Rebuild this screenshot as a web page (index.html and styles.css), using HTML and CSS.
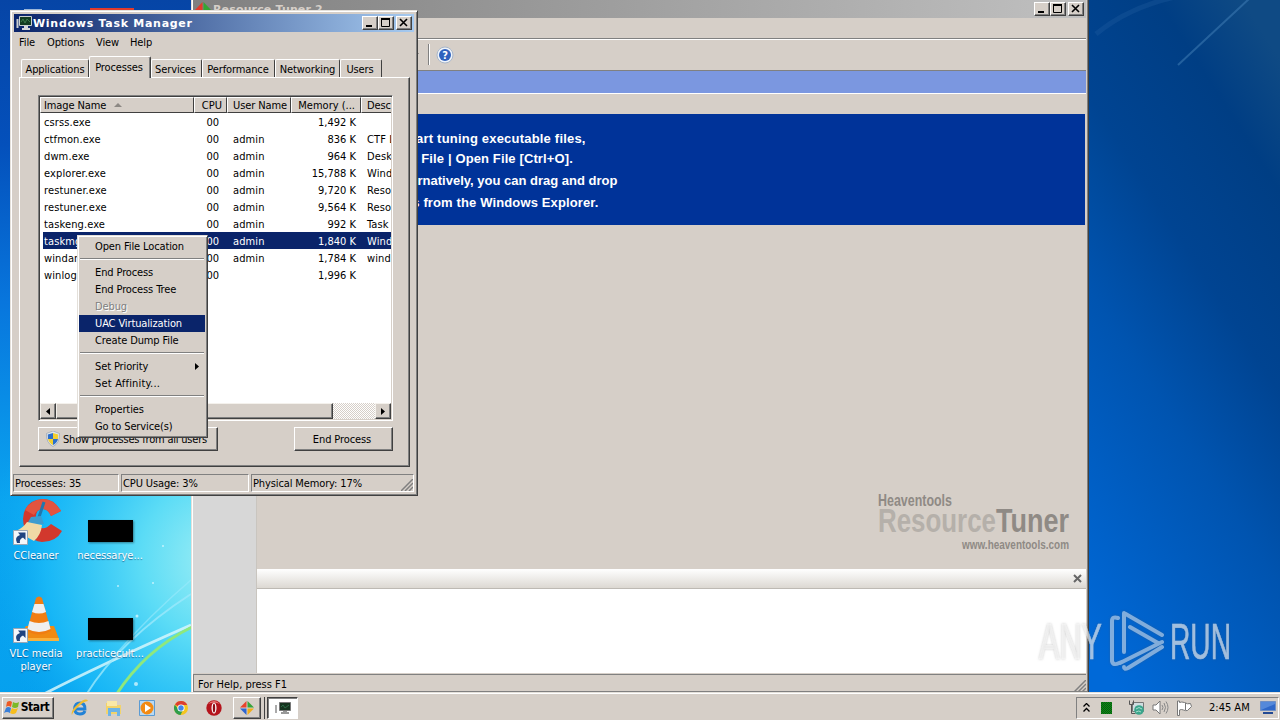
FILE: index.html
```html
<!DOCTYPE html>
<html lang="en">
<head>
  <meta charset="UTF-8">
  <meta name="viewport" content="width=device-width, initial-scale=1.0">
  <title>Windows Task Manager</title>
  <link rel="stylesheet" href="styles.css">
</head>
<body>
  <div class="desktop">
    <svg class="wallpaper" viewBox="0 0 1280 720" preserveAspectRatio="none">
      <defs>
        <linearGradient id="leftSky" x1="0" y1="0" x2="0" y2="1">
          <stop offset="0" stop-color="#0645a6"/>
          <stop offset=".2" stop-color="#0450bb"/>
          <stop offset=".42" stop-color="#0876dd"/>
          <stop offset=".7" stop-color="#0aa5f0"/>
          <stop offset="1" stop-color="#05a0ee"/>
        </linearGradient>
        <radialGradient id="glow" cx="225" cy="560" r="240" gradientUnits="userSpaceOnUse">
          <stop offset="0" stop-color="#a4f0f4"/>
          <stop offset=".35" stop-color="#5cdcf6"/>
          <stop offset=".75" stop-color="#1cbcf8" stop-opacity=".8"/>
          <stop offset="1" stop-color="#0aa5f0" stop-opacity="0"/>
        </radialGradient>
        <linearGradient id="rightSky" x1="1088" y1="640" x2="1488" y2="384" gradientUnits="userSpaceOnUse">
          <stop offset="0" stop-color="#0069d8"/>
          <stop offset=".4" stop-color="#0054b0"/>
          <stop offset=".62" stop-color="#004492"/>
          <stop offset=".85" stop-color="#003e84"/>
          <stop offset="1" stop-color="#0f4a84"/>
        </linearGradient>
      </defs>
      <rect width="600" height="720" fill="url(#leftSky)"/>
      <rect width="600" height="720" fill="url(#glow)"/>
      <rect x="600" width="680" height="720" fill="url(#rightSky)"/>
      <path d="M1178 65 1250-2" stroke="#3b78b0" stroke-width="2" opacity=".6"/>
      <path d="M1096 34Q1130 6 1180-4" stroke="#2a68a8" stroke-width="5" fill="none" opacity=".25"/>
      <path d="M42 695Q100 665 191 625" stroke="#d5f6fb" stroke-width="3" fill="none" opacity=".85"/>
      <path d="M86 695Q120 640 191 594" stroke="#9be9fb" stroke-width="2" fill="none" opacity=".8"/>
      <path d="M115 655Q150 615 191 580" stroke="#9be9fb" stroke-width="1.5" fill="none" opacity=".6"/>
      <path d="M116 695Q145 650 192 627" stroke="#8fe87c" stroke-width="3" fill="none"/>
      <path d="M90 8h44v3H90z" fill="#e23b2b"/>
      <path d="M24 9h18v2H24z" fill="#9db7d8"/>
      <g fill="#e8fbff" opacity=".7"><circle cx="118" cy="586" r="1"/><circle cx="136" cy="684" r="2"/><circle cx="153" cy="583" r="1"/><circle cx="137" cy="616" r="1.5"/><circle cx="163" cy="546" r="1"/></g>
    </svg>

    <div class="shortcuts">
      <div class="shortcut">
        <svg width="50" height="48" viewBox="0 0 50 48">
          <path d="M47 14Q40 2 29 2Q10 3 9 22Q10 43 28 45Q42 45 48 34L37 27Q28 36 22 26Q20 12 29 12Q34 12 37 19Z" fill="#d2382d"/>
          <path d="M47 14Q40 2 29 2Q16 3 11 13L20 18Q23 12 29 12Q34 12 37 19Z" fill="#e3543f"/>
          <path d="M30 5 25 20" stroke="#2277ad" stroke-width="3"/>
          <path d="M17 20 27 19 30 27 13 27Z" fill="#3d9ccf"/>
          <path d="M13 25 28 28Q27 38 20 44L2 34Q9 31 13 25Z" fill="#f0d9a5"/>
        </svg>
        <svg class="arrow" width="15" height="15" viewBox="0 0 15 15"><path d="M.5.5h14v14H.5z" fill="#f4f7fa" stroke="#9aa7b5"/><path d="M4 13Q1 7 7 5L5 2.500h7.500V10L10 7.500Q6 9 7 13Z" fill="#20437f"/></svg>
        <span>CCleaner</span>
      </div>
      <div class="shortcut">
        <div class="thumb"></div>
        <span>necessarye...</span>
      </div>
      <div class="shortcut">
        <svg width="50" height="48" viewBox="0 0 50 48">
          <path d="M8 37 12 31H40L45 44H8Z" fill="#f08a12"/><path d="M8 43h37v3H8z" fill="#f9b13c"/>
          <path d="M22 3Q25 0 28 3L37 36Q25 43 13 36Z" fill="#f07d12"/>
          <path d="M20.500 9h9l2.500 8Q25 20 18 17ZM15.500 26Q25 30 34.500 26L36.500 34Q25 40 13.500 34Z" fill="#efefef"/>
        </svg>
        <svg class="arrow" width="15" height="15" viewBox="0 0 15 15"><path d="M.5.5h14v14H.5z" fill="#f4f7fa" stroke="#9aa7b5"/><path d="M4 13Q1 7 7 5L5 2.500h7.500V10L10 7.500Q6 9 7 13Z" fill="#20437f"/></svg>
        <span>VLC media<br>player</span>
      </div>
      <div class="shortcut">
        <div class="thumb"></div>
        <span>practicecult...</span>
      </div>
    </div>

    <!-- Resource Tuner -->
    <div class="window tuner">
      <div class="titlebar inactive">
        <svg class="title-icon" width="16" height="16" viewBox="0 0 16 16"><path d="M7.500 1v8H0Z" fill="#e23b2b"/><path d="M8.500 1v8H16Z" fill="#34a534"/><path d="M0 10h7.500v6Z" fill="#2f66d0"/><path d="M16 10H8.500v6Z" fill="#f2bd18"/></svg>
        <span class="title-text">Resource Tuner 2</span>
        <div class="caption-buttons">
          <span class="cap"><svg width="14" height="12"><path d="M3 8h6v2H3z"/></svg></span><span class="cap"><svg width="14" height="12"><path d="M2.500 2.500h8v7h-8z" fill="none" stroke="#000"/><path d="M2 1h9v2H2z"/></svg></span><span class="cap cap-close"><svg width="14" height="12"><path d="m3 2 7 7m0-7-7 7" stroke="#000" stroke-width="1.600"/></svg></span>
        </div>
      </div>
      <div class="tuner-menu"></div>
      <div class="tuner-toolbar">
        <span class="drop"></span>
        <span class="tool-sep"></span>
        <svg width="18" height="18" viewBox="0 0 18 18"><circle cx="9" cy="9" r="8" fill="#eef3fa" stroke="#a9b6c8"/><circle cx="9" cy="9" r="6" fill="#2f62bd"/><text x="9" y="13" text-anchor="middle" class="help-mark">?</text></svg>
      </div>
      <div class="tuner-band"></div>
      <div class="tuner-gap"></div>
      <div class="tuner-main">
        <div class="tuner-side"></div>
        <div class="tuner-view">
          <div class="intro">
            <p class="line-start">To start tuning executable files,</p>
            <p class="line-open">select File | Open File [Ctrl+O].</p>
            <p class="line-drag">Alternatively, you can drag and drop</p>
            <p class="line-from">files from the Windows Explorer.</p>
          </div>
          <div class="brand">
            <svg width="196" height="62" viewBox="0 0 196 62">
              <text x="1" y="16" textLength="74" lengthAdjust="spacingAndGlyphs" class="brand-top">Heaventools</text>
              <text x="1" y="42" textLength="118" lengthAdjust="spacingAndGlyphs" class="brand-light">Resource</text>
              <text x="119" y="42" textLength="73" lengthAdjust="spacingAndGlyphs" class="brand-dark">Tuner</text>
              <text x="85" y="59" textLength="107" lengthAdjust="spacingAndGlyphs" class="brand-url">www.heaventools.com</text>
            </svg>
          </div>
          <div class="log-head"><svg width="9" height="9" viewBox="0 0 9 9"><path d="m1 1 7 7m0-7-7 7" stroke="#666" stroke-width="2"/></svg></div>
          <div class="log-body"></div>
        </div>
      </div>
      <div class="tuner-status"><span>For Help, press F1</span><svg width="12" height="12" viewBox="0 0 12 12"><path d="M0 12 12 0M4 12l8-8M8 12l4-4" stroke="#808080" stroke-width="1.500"/></svg></div>
    </div>

    <!-- Task Manager -->
    <div class="window taskmgr">
      <div class="titlebar">
        <svg class="title-icon" width="16" height="16" viewBox="0 0 16 16"><path d="M.5 4h2v9h-2z" fill="#c8ccd0"/><path d="M3.500 1.500h12v9h-12z" fill="#123c22" stroke="#c9d0cf"/><path d="M5 7l2-3 2 4 2-4 3 3" stroke="#3a7a4b" fill="none"/><path d="M8 11h4v2h2v2H6v-2h2z" fill="#d5d8da"/></svg>
        <span class="title-text">Windows Task Manager</span>
        <div class="caption-buttons">
          <span class="cap"><svg width="14" height="12"><path d="M3 8h6v2H3z"/></svg></span><span class="cap"><svg width="14" height="12"><path d="M2.500 2.500h8v7h-8z" fill="none" stroke="#000"/><path d="M2 1h9v2H2z"/></svg></span><span class="cap cap-close"><svg width="14" height="12"><path d="m3 2 7 7m0-7-7 7" stroke="#000" stroke-width="1.600"/></svg></span>
        </div>
      </div>
      <div class="menubar"><span class="m-file">File</span><span class="m-options">Options</span><span class="m-view">View</span><span>Help</span></div>
      <div class="tabs">
        <div class="tab t-app">Applications</div>
        <div class="tab t-proc active">Processes</div>
        <div class="tab t-serv">Services</div>
        <div class="tab t-perf">Performance</div>
        <div class="tab t-net">Networking</div>
        <div class="tab t-users">Users</div>
      </div>
      <div class="tab-panel">
        <div class="list">
          <div class="row head"><span>Image Name <i class="sort"></i></span><span>CPU</span><span>User Name</span><span>Memory (...</span><span>Desc</span></div>
          <div class="row"><span>csrss.exe</span><span>00</span><span></span><span>1,492 K</span><span></span></div>
          <div class="row"><span>ctfmon.exe</span><span>00</span><span>admin</span><span>836 K</span><span>CTF L</span></div>
          <div class="row"><span>dwm.exe</span><span>00</span><span>admin</span><span>964 K</span><span>Desk</span></div>
          <div class="row"><span>explorer.exe</span><span>00</span><span>admin</span><span>15,788 K</span><span>Wind</span></div>
          <div class="row"><span>restuner.exe</span><span>00</span><span>admin</span><span>9,720 K</span><span>Reso</span></div>
          <div class="row"><span>restuner.exe</span><span>00</span><span>admin</span><span>9,564 K</span><span>Reso</span></div>
          <div class="row"><span>taskeng.exe</span><span>00</span><span>admin</span><span>992 K</span><span>Task</span></div>
          <div class="row selected"><span>taskmgr.exe</span><span>00</span><span>admin</span><span>1,840 K</span><span>Wind</span></div>
          <div class="row"><span>windanr.exe</span><span>00</span><span>admin</span><span>1,784 K</span><span>winda</span></div>
          <div class="row"><span>winlogon.exe</span><span>00</span><span></span><span>1,996 K</span><span></span></div>
          <div class="scrollbar"><span class="sb-btn"><svg width="4" height="7"><path d="M4 0v7L0 3.500Z"/></svg></span><span class="sb-thumb"></span><span class="sb-track"></span><span class="sb-btn"><svg width="4" height="7"><path d="M0 0v7l4-3.500Z"/></svg></span></div>
        </div>
        <div class="panel-actions">
          <button class="btn show-all"><svg width="14" height="16" viewBox="0 0 14 16"><path d="M7 0 13.500 2.500Q14 12 7 15.500Q0 12 .5 2.500Z" fill="#dfe6ee" stroke="#8b98a8" stroke-width=".6"/><path d="M7 2v6H2L1.800 3.500Z" fill="#2c6fca"/><path d="M7 2v6h5l.2-4.500Z" fill="#f3cf2e"/><path d="M2 8h5v6Q3 12 2 8Z" fill="#f3cf2e"/><path d="M12 8H7v6Q11 12 12 8Z" fill="#2c6fca"/></svg>Show processes from all users</button>
          <button class="btn end">End Process</button>
        </div>
      </div>
      <div class="statusbar"><span class="s-proc">Processes: 35</span><span class="s-cpu">CPU Usage: 3%</span><span class="s-mem">Physical Memory: 17%<svg width="12" height="12" viewBox="0 0 12 12"><path d="M0 12 12 0M4 12l8-8M8 12l4-4" stroke="#808080" stroke-width="1.500"/></svg></span></div>
    </div>

    <ul class="context-menu">
      <li>Open File Location</li>
      <li class="sep"></li>
      <li>End Process</li>
      <li>End Process Tree</li>
      <li class="disabled">Debug</li>
      <li class="hover">UAC Virtualization</li>
      <li>Create Dump File</li>
      <li class="sep"></li>
      <li>Set Priority<svg width="4" height="7"><path d="M0 0v7l4-3.500Z"/></svg></li>
      <li class="affinity">Set Affinity...</li>
      <li class="sep"></li>
      <li>Properties</li>
      <li>Go to Service(s)</li>
    </ul>

    <svg class="watermark" width="200" height="70" viewBox="0 0 200 70">
      <g class="wm-text">
        <text x="3" y="52" textLength="63" lengthAdjust="spacingAndGlyphs">ANY</text>
        <text x="134" y="52" textLength="61" lengthAdjust="spacingAndGlyphs">RUN</text>
      </g>
      <path d="M82 11Q76 9 76 14V54Q77 59 83 56L88 54 M88 45V6L126 28 M94 20 122 36M88 45V6 M84 56 126 35M88 60Q88 63 92 61L126 40" fill="none" stroke="#b9d6f5" stroke-width="4" stroke-linejoin="round" stroke-linecap="round" opacity=".65"/>
    </svg>

    <div class="taskbar">
      <button class="start"><svg width="16" height="15" viewBox="0 0 16 15"><path d="M3 2Q6 0 8 2L7 7Q4 5 2 7Z" fill="#ee5a24"/><path d="M9 2Q12 4 15 2L14 7Q11 9 8 7Z" fill="#7cb928"/><path d="M2 8Q4 6 7 8L6 13Q3 11 0 13Z" fill="#3a7fd8"/><path d="M8 8Q11 10 14 8L12 13Q9 15 6 13Z" fill="#f7bd1c"/></svg>Start</button>
      <div class="quick">
        <svg width="18" height="18" viewBox="0 0 18 18"><path d="M4 10h10Q14 4 9 4T3.500 10Q4 15 9 15q4 0 5-3" fill="none" stroke="#2382d6" stroke-width="2.800"/><path d="M1 16Q-1 12 7 5T17 2Q13 2 7 8T1 16Z" fill="#eebc32"/></svg>
        <svg width="18" height="18" viewBox="0 0 18 18"><path d="M1 4h6l1 2h8v9H1z" fill="#f2d36b"/><path d="M2 2h10v5H2z" fill="#f9e8a8"/><path d="M3 9h12v8h-3v-4H6v4H3z" fill="#6db4e6"/></svg>
        <svg width="18" height="18" viewBox="0 0 18 18"><path d="M1.500 1.500h15v15h-15z" fill="#b9d9f3" stroke="#5b9bd3"/><circle cx="9" cy="9" r="6.500" fill="#f28a14"/><path d="M7 5v8l6-4z" fill="#fff"/></svg>
        <svg width="18" height="18" viewBox="0 0 18 18"><circle cx="9" cy="9" r="7" fill="#f4c51f"/><path d="M9 9 3 5.400A7 7 0 0 1 15.300 6H9Z" fill="#dc3e30"/><path d="M2.800 5.700A7 7 0 0 0 8.500 16L11 11 7 11Z" fill="#2f9d4b"/><circle cx="9" cy="9" r="3.600" fill="#fff"/><circle cx="9" cy="9" r="2.700" fill="#4285e8"/></svg>
        <svg width="18" height="18" viewBox="0 0 18 18"><circle cx="9" cy="9" r="7.700" fill="#b5141c"/><path d="M3 5Q9-1 15 5Q9 2 3 5Z" fill="#ea7a75"/><ellipse cx="9" cy="9" rx="2.500" ry="5.500" fill="#fff"/><ellipse cx="9" cy="9" rx="1.200" ry="4.500" fill="#8e0d14"/></svg>
      </div>
      <div class="task-btn"><svg width="16" height="16" viewBox="0 0 16 16"><path d="M7.500 1v6.500H1Z" fill="#e8432c"/><path d="M8.500 1v6.500H15Z" fill="#38a53a"/><path d="M1 8.500h6.500V15Z" fill="#2f66d0"/><path d="M15 8.500H8.500V15Z" fill="#f2ad18"/></svg></div>
      <div class="task-edge"></div>
      <div class="task-btn pressed"><svg width="18" height="16" viewBox="0 0 18 16"><path d="M1 5h2v8H1z" fill="#aaa"/><path d="M5.500 2.500h11v8h-11z" fill="#15331f" stroke="#777"/><path d="M7 7l2-2 2 3 4-3" stroke="#2b6b45" fill="none"/><path d="M9 11h4v1h2v2H7v-2h2z" fill="#999"/></svg></div>
      <div class="tray">
        <svg class="chev" width="7" height="9" viewBox="0 0 7 9"><path d="m.5 3.500 3-3 3 3m-6 5 3-3 3 3" stroke="#000" stroke-width="1.300" fill="none"/></svg>
        <span class="cpu-meter"></span>
        <svg class="net" width="17" height="16" viewBox="0 0 17 16"><path d="M4.500 2.500h11v9h-11z" fill="#cfdde0" stroke="#777"/><path d="M1.500.5v4h4v-4M3.500 4.500v9h4" fill="none" stroke="#555"/><circle cx="11" cy="10" r="4.800" fill="#3ba58b"/><path d="M8 9q3-3 6 0M8 12q3-2 5 0" stroke="#a8dccf" fill="none"/></svg>
        <svg class="vol" width="17" height="15" viewBox="0 0 17 15"><path d="M1 5h3l4-4v13l-4-4H1Z" fill="#fff" stroke="#777"/><path d="M10 5q2 2.500 0 5M12 3q3 4.500 0 9M14 1.500q4 6 0 12" fill="none" stroke="#888"/></svg>
        <svg class="flag" width="17" height="16" viewBox="0 0 17 16"><path d="M1.500 1v14.500h2V10q2-1 4 0 2 1 4 .5l4-4-1-3q-3 1-6-1-3-1-5 0V1Z" fill="#fff" stroke="#777"/><path d="M9.500 3v7" stroke="#777"/></svg>
        <span class="clock">2:45 AM</span>
        <svg width="16" height="13" viewBox="0 0 16 13"><path d="M.5.5h15v9H.5z" fill="#2f68c9" stroke="#6f8fc4"/><path d="M1 9 15 3V1H1Z" fill="#6fa0e6" opacity=".6"/><path d="M3 11h10v2H3z" fill="#234a94"/></svg>
      </div>
    </div>
  </div>
</body>
</html>
```

FILE: styles.css
```css
:root {
  --face: #d6cfc8;
  --dark: #404040;
  --shadow: #808080;
  --select: #0a246a;
}

* {
  margin: 0;
  padding: 0;
  box-sizing: border-box;
}

body {
  font-family: 'DejaVu Sans Condensed', 'DejaVu Sans', sans-serif;
  font-size: 11px;
  line-height: 17px;
  letter-spacing: -0.12px;
  color: #000;
  white-space: nowrap;
  overflow: hidden;
}

svg {
  display: block;
  flex: none;
}

.desktop {
  position: relative;
  width: 1280px;
  height: 720px;
  overflow: hidden;
}

.wallpaper {
  position: absolute;
  inset: 0;
  width: 1280px;
  height: 720px;
}

/* desktop icons */
.shortcuts {
  position: absolute;
  left: 0;
  top: 497px;
  display: grid;
  grid-template-columns: 72px 76px;
  grid-template-rows: 98px 98px;
  letter-spacing: 0;
}

.shortcut {
  position: relative;
  display: flex;
  flex-direction: column;
  align-items: center;
  color: #fff;
  line-height: 13px;
  text-align: center;
  text-shadow: 0 1px 1px rgba(0, 40, 90, 0.6);
}

.shortcut > svg:first-child {
  margin-left: 6px;
}

.shortcut span {
  margin-top: 4px;
}

.shortcut .arrow {
  position: absolute;
  left: 13px;
  top: 33px;
}

.thumb {
  width: 45px;
  height: 22px;
  margin: 23px 0 3px;
  background: #000;
  box-shadow: 1px 1px 2px rgba(0, 0, 0, 0.4);
}

/* windows */
.window {
  position: absolute;
  display: flex;
  flex-direction: column;
  background: var(--face);
  border: 1px solid;
  border-color: #e4e0da var(--dark) var(--dark) #e4e0da;
  box-shadow: inset 1px 1px #fff, inset -1px -1px var(--shadow);
}

.titlebar {
  display: flex;
  align-items: center;
  flex: none;
  height: 18px;
  padding: 0 2px;
  background: linear-gradient(to right, #0a246a, #a6caf0);
  color: #fff;
  font-family: 'DejaVu Sans', sans-serif;
  font-weight: bold;
  letter-spacing: 0.15px;
}

.titlebar.inactive {
  background: linear-gradient(to right, #808080, #c0c0c0);
  color: #d6cfc8;
}

.title-text {
  flex: 1;
  margin-left: 2px;
}

.taskmgr .title-text {
  margin-left: 1px;
  letter-spacing: 0.72px;
}

.caption-buttons {
  display: flex;
}

.cap {
  width: 16px;
  height: 14px;
  background: var(--face);
  border: 1px solid;
  border-color: #fff var(--dark) var(--dark) #fff;
  box-shadow: inset -1px -1px var(--shadow);
}

.cap-close {
  margin-left: 2px;
}

.tuner {
  left: 191px;
  top: -4px;
  width: 898px;
  height: 697px;
  padding: 3px 2px 0 1px;
}

.tuner-menu {
  flex: none;
  height: 21px;
  border-bottom: 1px solid var(--shadow);
}

.tuner-toolbar {
  display: flex;
  align-items: center;
  flex: none;
  height: 32px;
  padding: 0 0 1px 220px;
  border-top: 1px solid #fff;
  border-bottom: 1px solid var(--shadow);
}

.tuner-toolbar svg {
  margin-left: 6px;
}

.drop {
  margin-right: 9px;
  border: 3px solid transparent;
  border-top-color: #555;
  border-bottom: 0;
}

.tool-sep {
  width: 2px;
  height: 21px;
  border-left: 1px solid var(--shadow);
  border-right: 1px solid #fff;
}

.help-mark {
  fill: #fff;
  font-size: 11px;
  font-weight: bold;
}

.tuner-band {
  flex: none;
  height: 22px;
  background: #7b97e0;
}

.tuner-gap {
  flex: none;
  height: 21px;
  border-top: 1px solid #fff;
}

.tuner-main {
  display: flex;
  flex: 1;
}

.tuner-side {
  width: 63px;
  background: #d7d7d7;
}

.tuner-view {
  display: flex;
  flex: 1;
  flex-direction: column;
  border-left: 1px solid #c9c5bf;
}

.intro {
  height: 111px;
  margin-right: 1px;
  padding: 14px 0 0 121px;
  background: #003399;
  color: #fff;
  font: bold 13px/22px 'Liberation Sans', sans-serif;
}

.line-start {
  margin-left: 7px;
  letter-spacing: 0.2px;
}

.line-open {
  margin: -2px 0 0 2px;
  letter-spacing: 0.12px;
}

.line-drag {
  margin-left: 15px;
  letter-spacing: 0;
}

.line-from {
  margin-left: 15px;
  letter-spacing: 0.13px;
}

.brand {
  display: flex;
  flex: 1;
  align-items: flex-end;
  justify-content: flex-end;
  padding: 0 13px 17px 0;
}

.brand text {
  font-family: 'Liberation Sans Narrow', 'Liberation Sans', sans-serif;
  font-weight: bold;
  letter-spacing: 0;
  fill: #8f8a85;
}

.brand-top {
  font-size: 16px;
}

.brand-light,
.brand-dark {
  font-size: 33px;
}

.brand .brand-light {
  fill: #b5b0aa;
}

.brand-url {
  font-size: 13px;
}

.log-head {
  display: flex;
  align-items: center;
  justify-content: flex-end;
  height: 20px;
  padding-right: 4px;
  background: linear-gradient(#fff, #dcd8d2);
  border-bottom: 1px solid #bdb9b3;
}

.log-body {
  height: 84px;
  background: #fff;
}

.tuner-status {
  display: flex;
  align-items: center;
  justify-content: space-between;
  height: 18px;
  margin-top: 1px;
  padding-left: 4px;
  border-top: 1px solid var(--shadow);
  border-left: 1px solid var(--shadow);
  letter-spacing: 0;
}

.tuner-status span {
  padding-top: 1px;
}

.tuner-status svg {
  margin-top: 4px;
}

.taskmgr {
  left: 10px;
  top: 10px;
  width: 408px;
  height: 486px;
  padding: 3px;
}

.menubar {
  display: flex;
  height: 20px;
  padding: 2px 0 0 5px;
}

.m-file {
  width: 28px;
}

.m-options {
  width: 49px;
}

.m-view {
  width: 34px;
}

.tabs {
  display: flex;
  align-items: flex-end;
  flex: none;
  height: 25px;
  padding-left: 7px;
}

.tab {
  height: 18px;
  line-height: 20px;
  text-align: center;
  border: 1px solid #fff;
  border-right-color: var(--dark);
  border-bottom: 0;
  border-radius: 2px 2px 0 0;
}

.tab.active {
  position: relative;
  height: 22px;
  line-height: 21px;
  margin-bottom: -1px;
  background: var(--face);
  box-shadow: inset -1px 0 var(--shadow);
}

.t-app { width: 68px; }
.t-proc { width: 62px; padding-right: 2px; }
.t-serv { width: 51px; padding-right: 2px; }
.t-perf { width: 73px; padding-right: 1px; }
.t-net { width: 65px; }
.t-users { width: 42px; padding-right: 2px; }

.tab-panel {
  height: 390px;
  margin: 0 4px 0 5px;
  padding: 17px 16px 0 18px;
  border: 1px solid;
  border-color: #fff var(--dark) var(--dark) #fff;
  box-shadow: inset -1px -1px var(--shadow);
}

.list {
  display: flex;
  flex-direction: column;
  height: 326px;
  padding: 1px;
  overflow: hidden;
  background: #fff;
  border: 1px solid;
  border-color: var(--shadow) #fff #fff var(--shadow);
  box-shadow: inset 1px 1px var(--dark), inset -1px -1px var(--face);
}

.row {
  display: grid;
  grid-template-columns: 154px 33px 64px 70px 30px;
  flex: none;
  height: 17px;
  letter-spacing: 0.12px;
}

.row span {
  height: 17px;
  padding: 1px 0 0 6px;
  line-height: 17px;
  overflow: hidden;
}

.row span:first-child {
  padding-left: 4px;
}

.row span:nth-child(2),
.row span:nth-child(4) {
  padding: 1px 5px 0 0;
  text-align: right;
  letter-spacing: 0;
}

.row span:nth-child(2) {
  padding-right: 8px;
}

.row.head {
  height: 16px;
  background: var(--face);
  letter-spacing: -0.1px;
}

.row.head span {
  height: 16px;
  padding-top: 0;
  padding-left: 5px;
  border: 1px solid;
  border-color: #fff var(--dark) var(--dark) #fff;
  line-height: 15px;
}

.row.head span:first-child {
  padding-left: 3px;
}

.row.head span:nth-child(2) {
  padding-right: 4px;
}

.row.head span:last-child {
  border-right: 0;
}

.sort {
  display: inline-block;
  margin: 0 0 2px 5px;
  border: 4px solid transparent;
  border-top: 0;
  border-bottom-color: #8c8883;
}

.row.selected {
  grid-template-columns: 151px 33px 64px 70px 30px;
  margin-left: 3px;
  background: var(--select);
  color: #fff;
}

.row.selected span:first-child {
  padding-left: 1px;
}

.scrollbar {
  display: flex;
  height: 16px;
  margin-top: auto;
}

.sb-btn,
.sb-thumb {
  display: flex;
  align-items: center;
  justify-content: center;
  width: 16px;
  background: var(--face);
  border: 1px solid;
  border-color: #f4f1ec var(--dark) var(--dark) #f4f1ec;
  box-shadow: inset -1px -1px var(--shadow);
}

.sb-thumb {
  width: 277px;
}

.sb-track {
  flex: 1;
  background: repeating-conic-gradient(#fff 0 25%, #d6cfc8 0 50%) 0 0 / 2px 2px;
}

.panel-actions {
  display: flex;
  justify-content: space-between;
  margin-top: 6px;
}

.btn,
.start {
  display: flex;
  align-items: center;
  justify-content: center;
  background: var(--face);
  border: 1px solid;
  border-color: #fff var(--dark) var(--dark) #fff;
  box-shadow: inset -1px -1px var(--shadow);
  font: inherit;
  letter-spacing: -0.1px;
  color: #000;
}

.btn {
  height: 24px;
}

.show-all {
  justify-content: flex-start;
  width: 180px;
  gap: 3px;
  padding-left: 7px;
  letter-spacing: -0.2px;
}

.btn.end {
  width: 99px;
  padding-right: 3px;
}

.statusbar {
  display: flex;
  gap: 2px;
  height: 18px;
  margin: 7px 0 0 -1px;
}

.statusbar span {
  padding-left: 1px;
  border: 1px solid;
  border-color: var(--shadow) #fff #fff var(--shadow);
}

.s-proc {
  width: 106px;
}

.s-cpu {
  width: 128px;
}

.s-mem {
  display: flex;
  flex: 1;
  justify-content: space-between;
}

.s-mem svg {
  margin-top: 4px;
}

.context-menu {
  position: absolute;
  left: 77px;
  top: 235px;
  width: 131px;
  height: 203px;
  padding: 2px 2px 2px 1px;
  background: var(--face);
  border: 1px solid;
  border-color: #e4e0da var(--dark) var(--dark) #e4e0da;
  box-shadow: inset 1px 1px #fff, inset -1px -1px var(--shadow);
  list-style: none;
}

.context-menu li {
  display: flex;
  align-items: center;
  justify-content: space-between;
  height: 17px;
  padding: 0 6px 0 16px;
}

.context-menu .affinity {
  letter-spacing: 0.2px;
}

.context-menu .sep {
  height: 2px;
  margin: 3px 1px 4px;
  border-top: 1px solid var(--shadow);
  border-bottom: 1px solid #fff;
}

.context-menu .disabled {
  color: var(--shadow);
  text-shadow: 1px 1px #fff;
}

.context-menu .hover {
  background: var(--select);
  color: #fff;
}

.watermark {
  position: absolute;
  left: 1036px;
  top: 607px;
  filter: drop-shadow(0 0 1px rgba(90, 90, 90, 0.5));
}

.wm-text {
  font: 50px 'Liberation Sans Narrow', 'Liberation Sans', sans-serif;
  letter-spacing: 0;
  fill: #fff;
  stroke: #fff;
  stroke-width: 0.6px;
  opacity: 0.6;
}

/* taskbar */
.taskbar {
  position: absolute;
  left: 0;
  bottom: 0;
  display: flex;
  align-items: center;
  width: 1280px;
  height: 28px;
  padding: 3px 1px 1px 2px;
  background: var(--face);
  border-top: 1px solid #e4e0da;
  box-shadow: inset 0 1px #fff;
}

.start {
  width: 52px;
  height: 22px;
  gap: 1px;
  padding-right: 3px;
  font-weight: bold;
  font-size: 12px;
  letter-spacing: -0.4px;
}

.quick {
  display: flex;
  gap: 15.5px;
  margin-left: 17px;
}

.task-btn {
  display: flex;
  align-items: center;
  justify-content: center;
  width: 28px;
  height: 22px;
  margin-left: 10px;
  border: 1px solid;
  border-color: #fff var(--dark) var(--dark) #fff;
  box-shadow: inset -1px -1px var(--shadow);
}

.task-edge {
  width: 4px;
  height: 22px;
  border-right: 1px solid var(--dark);
}

.task-btn.pressed {
  width: 31px;
  margin-left: 2px;
  background: #fff;
  border-color: var(--dark) #fff #fff var(--dark);
  box-shadow: inset 1px 1px var(--shadow);
}

.tray {
  display: flex;
  align-items: center;
  width: 203px;
  height: 22px;
  margin-left: auto;
  padding: 0 0 0 6px;
  border: 1px solid;
  border-color: var(--shadow) #fff #fff var(--shadow);
}

.cpu-meter {
  flex: none;
  width: 11px;
  height: 12px;
  margin: 0 16px 0 11px;
  background: repeating-conic-gradient(#0a5a0a 0 25%, #0a8a1a 0 50%) 0 0 / 2px 2px;
}

.vol,
.flag {
  margin-left: 7px;
}

.clock {
  width: 41px;
  margin: 0 10px 0 16px;
  letter-spacing: 0;
}
```
